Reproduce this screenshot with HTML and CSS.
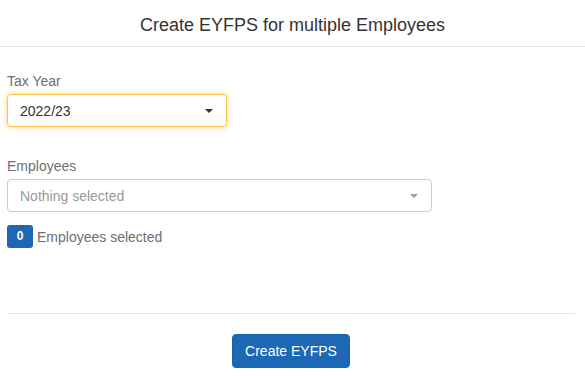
FILE: index.html
```html
<!DOCTYPE html>
<html lang="en">
<head>
    <meta charset="UTF-8">
    <meta name="viewport" content="width=device-width, initial-scale=1.0">
    <title>Create EYFPS</title>
    <link rel="stylesheet" href="styles.css">
</head>
<body>
    <div class="modal">
        <div class="modal-header">
            <h4>Create EYFPS for multiple Employees</h4>
        </div>
        <div class="modal-body">
            <div class="form-group">
                <label>Tax Year</label>
                <div class="select focused">
                    <span class="value">2022/23</span>
                    <span class="caret"></span>
                </div>
            </div>
            <div class="form-group">
                <label>Employees</label>
                <div class="select wide">
                    <span class="placeholder">Nothing selected</span>
                    <span class="caret light"></span>
                </div>
            </div>
            <div class="count">
                <span class="badge">0</span>
                <span class="count-text">Employees selected</span>
            </div>
        </div>
        <div class="modal-footer">
            <button class="btn">Create EYFPS</button>
        </div>
    </div>
</body>
</html>
```

FILE: styles.css
```css
body {
    font-family: 'Liberation Sans', Arial, sans-serif;
    font-size: 14px;
    line-height: 20px;
    color: #333;
    margin: 0;
    background: #fff;
}
.modal {
    width: 585px;
}
.modal-header {
    box-sizing: border-box;
    height: 47px;
    padding-top: 3px;
    border-bottom: 1px solid #e5e5e5;
    display: flex;
    align-items: center;
    justify-content: center;
}
.modal-header h4 {
    margin: 0;
    font-size: 18px;
    font-weight: normal;
    color: #333;
}
.modal-body {
    padding: 24px 10px 0 7px;
    height: 242px;
}
.form-group {
    margin-bottom: 29px;
}
.form-group label {
    display: block;
    color: #6f6f6f;
    margin-bottom: 3px;
}
.select {
    box-sizing: border-box;
    width: 220px;
    height: 33px;
    border: 1px solid #ccc;
    border-radius: 4px;
    display: flex;
    align-items: center;
    justify-content: space-between;
    padding: 0 12px 0 12px;
}
.select.wide {
    width: 425px;
}
.select.focused {
    border-color: #fbc34a;
    box-shadow: 0 0 4px 1px rgba(255, 190, 60, 0.55);
}
.value {
    color: #333;
}
.placeholder {
    color: #999;
}
.caret {
    width: 0;
    height: 0;
    border-left: 4px solid transparent;
    border-right: 4px solid transparent;
    border-top: 4px solid #333;
    margin-right: 1px;
}
.caret.light {
    border-top-color: #999;
}
.count {
    display: flex;
    align-items: center;
    gap: 4px;
    margin-top: -16px;
}
.badge {
    display: inline-block;
    width: 26px;
    height: 23px;
    line-height: 23px;
    text-align: center;
    background: #1c68b4;
    color: #fff;
    font-size: 12px;
    font-weight: bold;
    border-radius: 3px;
}
.count-text {
    color: #6f6f6f;
}
.modal-footer {
    margin: 0 10px 0 7px;
    border-top: 1px solid #e5e5e5;
    display: flex;
    justify-content: center;
    padding-top: 20px;
}
.btn {
    font-family: inherit;
    font-size: 14px;
    line-height: 20px;
    padding: 6px 12px;
    background: #1c68b4;
    color: #fff;
    border: 1px solid #1a62aa;
    border-radius: 4px;
}
```
